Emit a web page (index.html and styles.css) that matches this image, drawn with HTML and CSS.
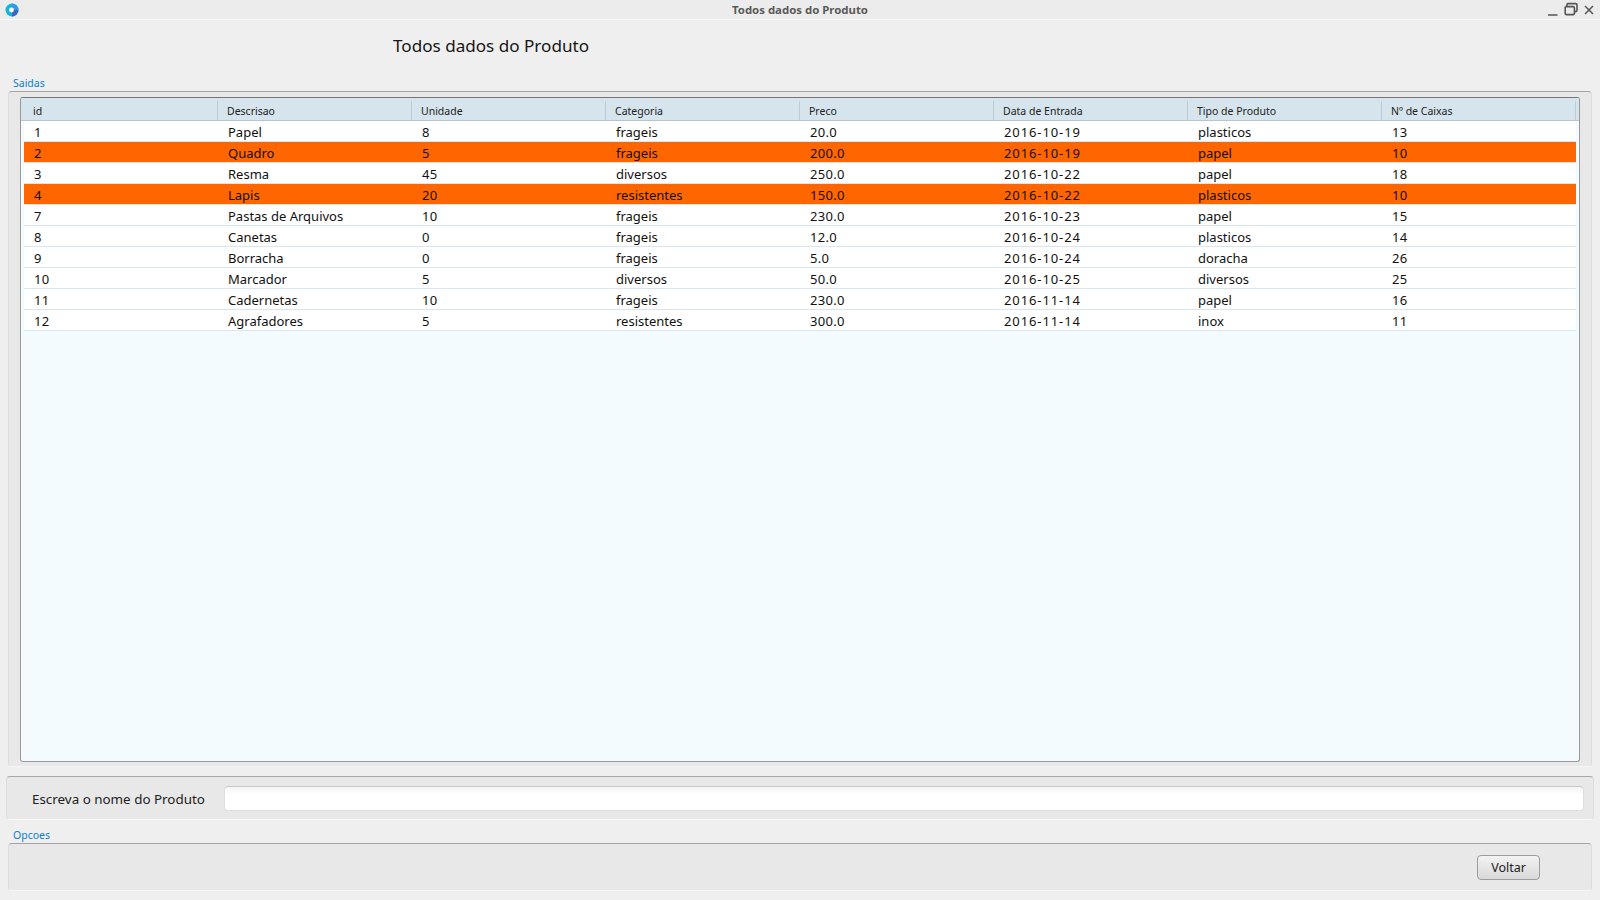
FILE: index.html

```html
<!DOCTYPE html>
<html lang="pt">
<head>
    <meta charset="UTF-8">
    <title>Todos dados do Produto</title>
    <link rel="stylesheet" href="styles.css">
</head>
<body>
<div class="titlebar">
    <svg class="app-icon" width="14" height="14" viewBox="0 0 14 14">
        <circle cx="7" cy="7" r="6.5" fill="#12b5d8"/>
        <path d="M7 7 L13.5 7 A6.5 6.5 0 0 1 7 13.5 Z" fill="#3f63c4"/>
        <path d="M7 .5 A6.5 6.5 0 0 1 13.5 7 L7 7 Z" fill="#2f9be6"/>
        <circle cx="6.5" cy="7" r="2.4" fill="#fff"/>
    </svg>
    <span class="window-title">Todos dados do Produto</span>
    <div class="window-buttons">
        <svg width="10" height="15" viewBox="0 0 10 15"><path d="M0 14 H9.5" stroke="#555" stroke-width="1.5" fill="none"/></svg>
        <svg width="14" height="15" viewBox="0 0 14 15"><path d="M3 5 V3.4 Q3 2.6 3.8 2.6 H11.6 Q13 2.6 13 4 V9.6 Q13 10.6 12 10.6 H10.6 M1.4 5.6 H9 Q10.4 5.6 10.4 7 V12.4 Q10.4 13.6 9.2 13.6 H2.6 Q1.2 13.6 1.2 12.2 V5.6" stroke="#555" stroke-width="1.6" fill="none"/></svg>
        <svg width="10" height="15" viewBox="0 0 10 15"><path d="M1 5 L9 13 M9 5 L1 13" stroke="#555" stroke-width="1.5" fill="none"/></svg>
    </div>
</div>

<h1 class="page-title">Todos dados do Produto</h1>

<div class="group-label saidas-label">Saidas</div>
<div class="group saidas">
    <div class="table-box">
        <div class="table-head">
            <div class="th">id</div>
            <div class="th">Descrisao</div>
            <div class="th">Unidade</div>
            <div class="th">Categoria</div>
            <div class="th">Preco</div>
            <div class="th">Data de Entrada</div>
            <div class="th">Tipo de Produto</div>
            <div class="th">Nº de Caixas</div>
        </div>
        <div class="row"><span>1</span><span>Papel</span><span>8</span><span>frageis</span><span>20.0</span><span>2016-10-19</span><span>plasticos</span><span>13</span></div>
        <div class="row low"><span>2</span><span>Quadro</span><span>5</span><span>frageis</span><span>200.0</span><span>2016-10-19</span><span>papel</span><span>10</span></div>
        <div class="row"><span>3</span><span>Resma</span><span>45</span><span>diversos</span><span>250.0</span><span>2016-10-22</span><span>papel</span><span>18</span></div>
        <div class="row low"><span>4</span><span>Lapis</span><span>20</span><span>resistentes</span><span>150.0</span><span>2016-10-22</span><span>plasticos</span><span>10</span></div>
        <div class="row"><span>7</span><span>Pastas de Arquivos</span><span>10</span><span>frageis</span><span>230.0</span><span>2016-10-23</span><span>papel</span><span>15</span></div>
        <div class="row"><span>8</span><span>Canetas</span><span>0</span><span>frageis</span><span>12.0</span><span>2016-10-24</span><span>plasticos</span><span>14</span></div>
        <div class="row"><span>9</span><span>Borracha</span><span>0</span><span>frageis</span><span>5.0</span><span>2016-10-24</span><span>doracha</span><span>26</span></div>
        <div class="row"><span>10</span><span>Marcador</span><span>5</span><span>diversos</span><span>50.0</span><span>2016-10-25</span><span>diversos</span><span>25</span></div>
        <div class="row"><span>11</span><span>Cadernetas</span><span>10</span><span>frageis</span><span>230.0</span><span>2016-11-14</span><span>papel</span><span>16</span></div>
        <div class="row"><span>12</span><span>Agrafadores</span><span>5</span><span>resistentes</span><span>300.0</span><span>2016-11-14</span><span>inox</span><span>11</span></div>
    </div>
</div>

<div class="search-panel">
    <label class="search-label" for="nome">Escreva o nome do Produto</label>
    <input class="search-input" id="nome" type="text">
</div>

<div class="group-label opcoes-label">Opcoes</div>
<div class="group opcoes">
    <button class="btn" type="button">Voltar</button>
</div>
</body>
</html>
```

FILE: styles.css

```css
* {
    box-sizing: border-box;
    margin: 0;
    padding: 0;
}

body {
    width: 1600px;
    height: 900px;
    overflow: hidden;
    background: #efefef;
    font-family: "Noto Sans", "DejaVu Sans", sans-serif;
    font-size: 13px;
    color: #111;
}

.titlebar {
    height: 20px;
    background: #ececec;
    border-bottom: 1px solid #f8f8f8;
    display: flex;
    align-items: center;
    justify-content: center;
    position: relative;
}

.app-icon {
    position: absolute;
    left: 5px;
    top: 3px;
}

.window-title {
    font-weight: bold;
    font-size: 11.4px;
    line-height: 20px;
    color: #5a5a5a;
}

.window-buttons {
    position: absolute;
    left: 1548px;
    top: 1px;
    display: flex;
    gap: 6px;
}

.page-title {
    font-size: 17.1px;
    font-weight: normal;
    line-height: 24px;
    margin: 14px 0 0 393px;
    color: #161616;
}

.group-label {
    font-size: 10.5px;
    line-height: 14px;
    color: #0a7fd0;
    margin-left: 13px;
}

.saidas-label {
    margin-top: 18px;
}

.group {
    margin: 1px 8px 0;
    background: #e8e8e8;
    border: 1px solid #dcdcdc;
    border-top-color: #a3a3a3;
    border-bottom-color: #f6f6f6;
    border-radius: 4px;
}

.saidas {
    height: 676px;
    padding: 5px 11px 4px;
}

.table-box {
    height: 100%;
    background: #f4fbff;
    border: 1px solid #9a9a9a;
    border-top-color: #777;
    border-radius: 3px;
    overflow: hidden;
}

.table-head {
    display: flex;
    height: 23px;
    padding-left: 3px;
    padding-top: 3px;
    background: #d5e4ed;
    border-bottom: 1px solid #b9c4cb;
}

.th {
    width: 194px;
    padding-left: 9px;
    border-right: 1px solid #bccbd4;
    font-size: 10.5px;
    line-height: 21px;
    color: #222;
}

.row {
    display: flex;
    height: 21px;
    margin-left: 3px;
    width: 1552px;
    background: #fff;
    border-bottom: 1px solid #d7e6f0;
    line-height: 22px;
}

.row span {
    width: 194px;
    padding-left: 10px;
}

/* digits are wider in the original font */
.row span:nth-child(1),
.row span:nth-child(3),
.row span:nth-child(5),
.row span:nth-child(8) {
    letter-spacing: .3px;
}

.row span:nth-child(6) {
    letter-spacing: .9px;
}

.row.low {
    background: #ff6600;
    border-bottom-color: #fbe3d2;
}

.search-panel {
    margin: 9px 6px 0;
    height: 44px;
    padding: 9px 9px 9px 25px;
    background: #e8e8e8;
    border: 1px solid #dcdcdc;
    border-top-color: #a8a8a8;
    border-bottom-color: #f6f6f6;
    border-radius: 4px;
    display: flex;
    align-items: center;
}

.search-label {
    width: 192px;
    font-size: 13.4px;
    line-height: 20px;
    padding-top: 2px;
    color: #222;
}

.search-input {
    flex: 1;
    height: 25px;
    background: linear-gradient(#f5f5f5, #fff 8px);
    border: 1px solid #dedede;
    border-top-color: #c8c8c8;
    border-radius: 4px;
}

.opcoes-label {
    margin-top: 8px;
}

.opcoes {
    height: 48px;
    display: flex;
    justify-content: flex-end;
    align-items: flex-start;
    padding: 11px 51px 0 0;
}

.btn {
    width: 63px;
    height: 25px;
    font-family: inherit;
    font-size: 12.5px;
    color: #222;
    background: linear-gradient(#f2f2f2, #d9d9d9);
    border: 1px solid #9c9c9c;
    border-radius: 4px;
}
```
